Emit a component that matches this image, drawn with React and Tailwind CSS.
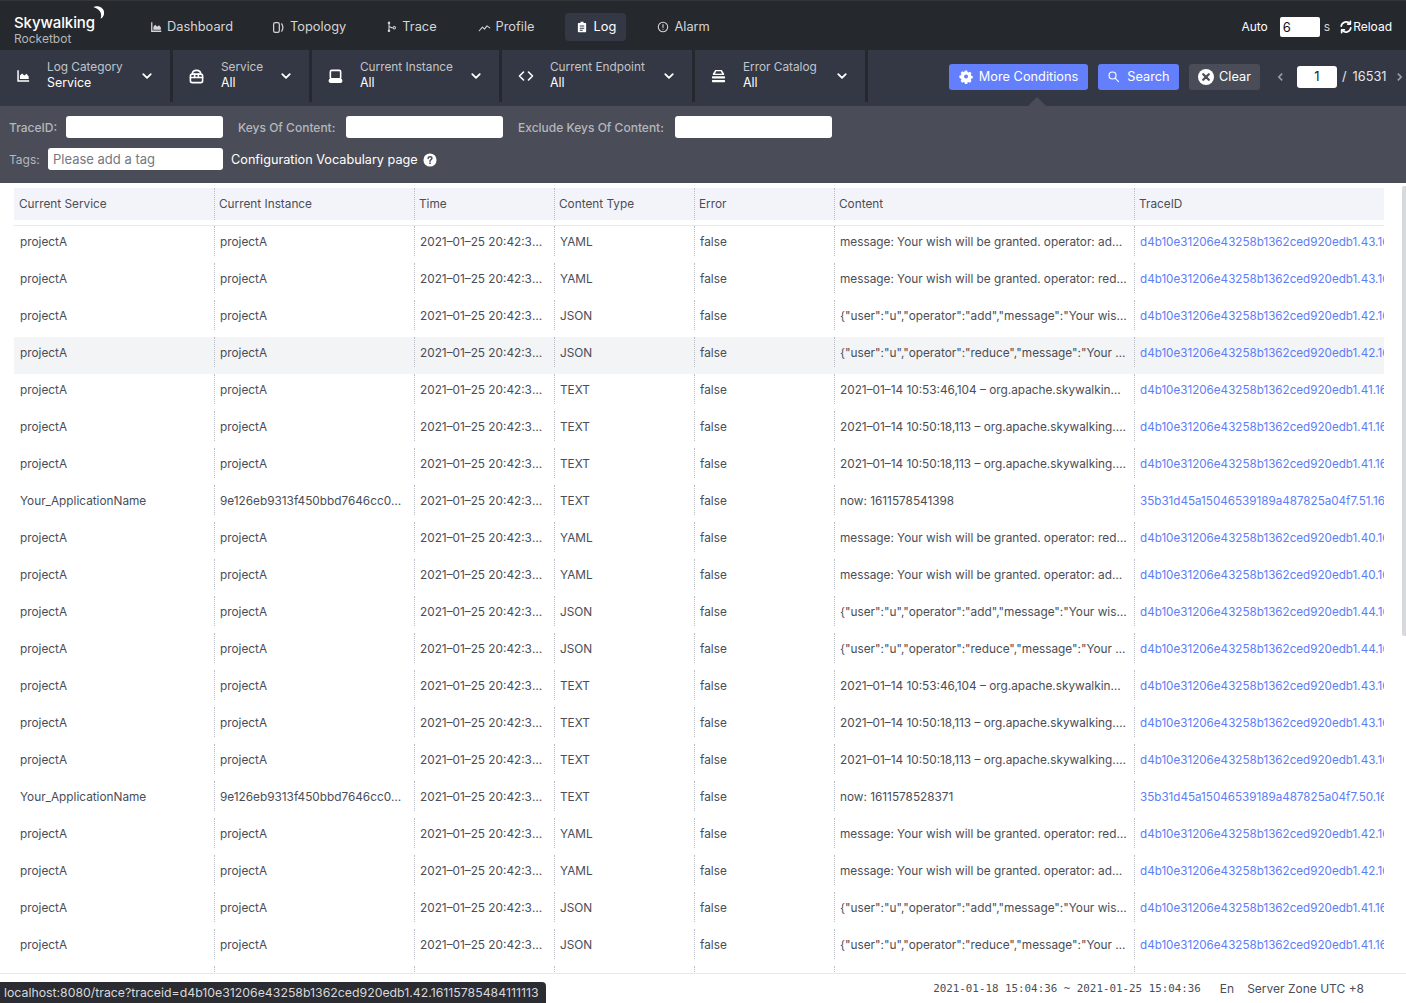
import React from "react";

const ADD = "message: Your wish will be granted. operator: add, user: u";
const REDUCE = "message: Your wish will be granted. operator: reduce, user: u";
const JSON_ADD = '{"user":"u","operator":"add","message":"Your wish will be granted"}';
const JSON_REDUCE = '{"user":"u","operator":"reduce","message":"Your wish will be granted"}';
const TEXT_A = "2021–01–14 10:53:46,104 – org.apache.skywalking.apm.testcase.Application";
const TEXT_B = "2021–01–14 10:50:18,113 – org.apache.skywalking.apm.testcase.Application";
const TID = "d4b10e31206e43258b1362ced920edb1";
const OTHER = "35b31d45a15046539189a487825a04f7";
const APP = "Your_ApplicationName";
const INST = "9e126eb9313f450bbd7646cc0a8f31d2@192.168.1.12";

const logs = [
  ["projectA", "projectA", "YAML", ADD, TID + ".43.16115785484111113"],
  ["projectA", "projectA", "YAML", REDUCE, TID + ".43.16115785484111113"],
  ["projectA", "projectA", "JSON", JSON_ADD, TID + ".42.16115785484111113"],
  ["projectA", "projectA", "JSON", JSON_REDUCE, TID + ".42.16115785484111113"],
  ["projectA", "projectA", "TEXT", TEXT_A, TID + ".41.16115785484111113"],
  ["projectA", "projectA", "TEXT", TEXT_B, TID + ".41.16115785484111113"],
  ["projectA", "projectA", "TEXT", TEXT_B, TID + ".41.16115785484111113"],
  [APP, INST, "TEXT", "now: 1611578541398", OTHER + ".51.16115785413980001"],
  ["projectA", "projectA", "YAML", REDUCE, TID + ".40.16115785484111113"],
  ["projectA", "projectA", "YAML", ADD, TID + ".40.16115785484111113"],
  ["projectA", "projectA", "JSON", JSON_ADD, TID + ".44.16115785484111113"],
  ["projectA", "projectA", "JSON", JSON_REDUCE, TID + ".44.16115785484111113"],
  ["projectA", "projectA", "TEXT", TEXT_A, TID + ".43.16115785484111113"],
  ["projectA", "projectA", "TEXT", TEXT_B, TID + ".43.16115785484111113"],
  ["projectA", "projectA", "TEXT", TEXT_B, TID + ".43.16115785484111113"],
  [APP, INST, "TEXT", "now: 1611578528371", OTHER + ".50.16115785283710001"],
  ["projectA", "projectA", "YAML", REDUCE, TID + ".42.16115785484111113"],
  ["projectA", "projectA", "YAML", ADD, TID + ".42.16115785484111113"],
  ["projectA", "projectA", "JSON", JSON_ADD, TID + ".41.16115785484111113"],
  ["projectA", "projectA", "JSON", JSON_REDUCE, TID + ".41.16115785484111113"],
  ["projectA", "projectA", "YAML", ADD, TID + ".41.16115785484111113"],
];

function Icon({ className, children, fill = "none", stroke = "currentColor", sw = 1.6 }) {
  return (
    <svg viewBox="0 0 16 16" className={className} fill={fill} stroke={stroke} strokeWidth={sw} strokeLinecap="round" strokeLinejoin="round">
      {children}
    </svg>
  );
}

const DashIcon = ({ className }) => (
  <Icon className={className} fill="currentColor" stroke="none">
    <path d="M1.500 1.500h1.700v11.300H15v1.700H1.500z" />
    <path d="M4.500 11.500V7.500l2.500-2.500 2.500 2.500L12 5.500l2.500 3v3z" />
  </Icon>
);
const TopoIcon = ({ className }) => (
  <Icon className={className} sw={1.5}>
    <rect x="2" y="2" width="7" height="12" rx="2" />
    <path d="M12 3.500c1.600 2.600 1.600 6.400 0 9" />
  </Icon>
);
const TraceIcon = ({ className }) => (
  <Icon className={className} sw={1.4}>
    <path d="M4 2.500v11M4 7.500c2 0 2.500 1.500 4.500 1.500" />
    <circle cx="4" cy="2.500" r="1" />
    <circle cx="4" cy="13" r="1" />
    <circle cx="11" cy="9" r="1.600" />
  </Icon>
);
const ProfileIcon = ({ className }) => (
  <Icon className={className} sw={1.300}>
    <path d="M1.500 12l4-4.500 2.500 2.500 3-4 3.500 2.500" />
  </Icon>
);
const LogIcon = ({ className }) => (
  <Icon className={className} fill="currentColor" stroke="none">
    <path fillRule="evenodd" d="M6 1h4v1.500h2.500a1 1 0 0 1 1 1V14a1 1 0 0 1-1 1h-9a1 1 0 0 1-1-1V3.500a1 1 0 0 1 1-1H6zM5 6v1.300h6V6zm0 3v1.300h6V9zm0 2.800V13h4v-1.200z" />
  </Icon>
);
const AlarmIcon = ({ className }) => (
  <Icon className={className} sw={1.400}>
    <circle cx="8" cy="8" r="6.300" />
    <path d="M8 4.800v3.700M8 11v.1" />
  </Icon>
);
const ReloadIcon = ({ className }) => (
  <Icon className={className} sw={1.900}>
    <path d="M2.500 7A5.700 5.700 0 0 1 12.500 4.300" />
    <path d="M13.500 9a5.700 5.700 0 0 1-10 2.700" />
    <path d="M13 1.500v3.200H9.800M3 14.500v-3.200h3.200" />
  </Icon>
);
const Chevron = ({ className }) => (
  <Icon className={className} sw={2.400}>
    <path d="M3 5.500l5 5 5-5" />
  </Icon>
);
const BagIcon = ({ className }) => (
  <Icon className={className} sw={1.700}>
    <rect x="1.500" y="5.500" width="13" height="9" rx="2" />
    <path d="M3.500 5.500C3.500 3 5 1.500 8 1.500s4.500 1.500 4.500 4M1.500 9h13" />
    <path d="M6 5.500V9M10 5.500V9" />
  </Icon>
);
const InstIcon = ({ className }) => (
  <Icon className={className} sw={1.700}>
    <rect x="2.500" y="1.500" width="11" height="9" rx="1.500" />
    <rect x="1.500" y="11" width="13" height="3" rx="1.200" fill="currentColor" />
  </Icon>
);
const CodeIcon = ({ className }) => (
  <Icon className={className} sw={1.600}>
    <path d="M5.500 4L1.500 8l4 4M10.500 4l4 4-4 4" />
  </Icon>
);
const StackIcon = ({ className }) => (
  <Icon className={className} fill="currentColor" stroke="none">
    <path d="M4.500 1h7L14 5v1.500H2V5zM5.500 2.500L4.300 5h7.400l-1.200-2.500z" fillRule="evenodd" />
    <rect x="1" y="7.800" width="14" height="2.400" rx="0.800" />
    <rect x="1" y="11.600" width="14" height="2.400" rx="0.800" />
  </Icon>
);
const GearIcon = ({ className }) => (
  <svg viewBox="0 0 16 16" className={className} fill="currentColor">
    <path fillRule="evenodd" d="M6.600 1h2.800l.4 1.900 1.300.6 1.700-1 2 2-1 1.700.6 1.300 1.900.4v2.800l-1.900.4-.6 1.300 1 1.700-2 2-1.700-1-1.300.6-.4 1.900H6.600l-.4-1.900-1.300-.6-1.700 1-2-2 1-1.700-.6-1.300L-.3 10.100V7.300l1.900-.4.6-1.300-1-1.700 2-2 1.700 1 1.300-.6zM8 6a2.500 2.500 0 1 0 0 5 2.500 2.500 0 0 0 0-5z" transform="translate(0.700 -0.300) scale(0.92)" />
  </svg>
);
const SearchIcon = ({ className }) => (
  <Icon className={className} sw={1.400}>
    <circle cx="6.800" cy="6.800" r="4.300" />
    <path d="M10 10l4.200 4.200" />
  </Icon>
);
const ClearIcon = ({ className }) => (
  <svg viewBox="0 0 16 16" className={className}>
    <circle cx="8" cy="8" r="8" fill="#fff" />
    <path d="M5.200 5.200l5.600 5.600M10.800 5.200l-5.600 5.600" stroke="#4a4d57" strokeWidth="2.200" strokeLinecap="round" />
  </svg>
);
const HelpIcon = ({ className }) => (
  <svg viewBox="0 0 16 16" className={className}>
    <circle cx="8" cy="8" r="7.500" fill="#fff" />
    <path d="M5.800 6.200C5.900 4.800 6.800 4.200 8 4.200c1.300 0 2.200.7 2.200 1.800 0 1.600-2.200 1.600-2.200 3.300" fill="none" stroke="#4a4d57" strokeWidth="1.700" strokeLinecap="round" />
    <circle cx="8" cy="11.700" r="1" fill="#4a4d57" />
  </svg>
);

const navItems = [
  { label: "Dashboard", Ico: DashIcon, cls: "ml-[45px] gap-[5px]", icon: "w-3 h-3" },
  { label: "Topology", Ico: TopoIcon, cls: "ml-[39px] gap-[5px]", icon: "w-[13px] h-[13px]" },
  { label: "Trace", Ico: TraceIcon, cls: "ml-[40px] gap-[4px]", icon: "w-3 h-3" },
  { label: "Profile", Ico: ProfileIcon, cls: "ml-[41px] gap-[5px]", icon: "w-[13px] h-[13px]" },
];

const selectors = [
  { title: "Log Category", value: "Service", Ico: DashIcon, w: "w-[173px]", icon: "w-[14px] h-[14px]", gap: "ml-[17px]" },
  { title: "Service", value: "All", Ico: BagIcon, w: "w-[139px]", icon: "w-[15px] h-[15px]", gap: "ml-[17px]" },
  { title: "Current Instance", value: "All", Ico: InstIcon, w: "w-[190px]", icon: "w-[15px] h-[15px]", gap: "ml-[17px]" },
  { title: "Current Endpoint", value: "All", Ico: CodeIcon, w: "w-[193px]", icon: "w-[16px] h-[16px]", gap: "ml-[16px]" },
  { title: "Error Catalog", value: "All", Ico: StackIcon, w: "w-[173px]", icon: "w-[15px] h-[15px]", gap: "ml-[17px]" },
];

const columns = [
  { label: "Current Service", w: "w-[200px]" },
  { label: "Current Instance", w: "w-[200px]" },
  { label: "Time", w: "w-[140px]" },
  { label: "Content Type", w: "w-[140px]" },
  { label: "Error", w: "w-[140px]" },
  { label: "Content", w: "w-[300px]" },
  { label: "TraceID", w: "w-[250px]" },
];

function Selector({ item }) {
  const Ico = item.Ico;
  return (
    <div className={`flex h-[52px] shrink-0 items-center border-r-[3px] border-[#25282e] ${item.w}`}>
      <Ico className={`${item.icon} ml-[16px] shrink-0 text-white`} />
      <div className={`${item.gap} -mt-[3px] flex-1`}>
        <div className="text-[11.800px] leading-[15px] text-[#c2c4ca]">{item.title}</div>
        <div className="text-[12.400px] leading-[15px] text-white">{item.value}</div>
      </div>
      <Chevron className="mr-[17px] h-3 w-3 shrink-0 text-white" />
    </div>
  );
}

function Cell({ i, children, className = "" }) {
  return (
    <div className={`h-[30px] shrink-0 truncate border-dotted border-[#b8bbc2] pl-[5px] leading-[33px] ${columns[i].w} ${i > 0 ? "border-l" : "pl-[6px]"} ${className}`}>
      {children}
    </div>
  );
}

function LogRow({ log, hover }) {
  return (
    <div className={`flex h-[37px] shrink-0 text-[11.800px] text-[#4a4d57] ${hover ? "bg-[#f3f4f5]" : ""}`}>
      <Cell i={0} className="pr-2">{log[0]}</Cell>
      <Cell i={1} className="pr-[9px]">{log[1]}</Cell>
      <Cell i={2} className="pr-[7px]">2021–01–25 20:42:36.123</Cell>
      <Cell i={3} className="pr-2">{log[2]}</Cell>
      <Cell i={4} className="pr-2">false</Cell>
      <Cell i={5} className="pr-[7px]">{log[3]}</Cell>
      <div className="h-[30px] w-[250px] shrink-0 overflow-hidden whitespace-nowrap border-l border-dotted border-[#b8bbc2] pl-[5px] text-[11.650px] leading-[33px] text-[#5d7df8]">
        {log[4]}
      </div>
    </div>
  );
}

export default function App() {
  return (
    <div className="relative flex h-[1003px] w-[1406px] flex-col overflow-hidden bg-white font-['Inter','Noto_Sans',sans-serif]">
      {/* top nav */}
      <div className="flex h-[50px] shrink-0 items-center border-t border-[#33353a] bg-[#25282d] pt-[3px] text-[12.800px] text-[#d4d5d8]">
        <div className="ml-[14px] mt-[1px] w-[91px] shrink-0">
          <div className="relative flex h-[22px] items-center pt-[4px] text-[15px] font-medium leading-none tracking-[-0.1px] text-white">
            Skywalking
            <svg viewBox="0 0 14 14" className="absolute right-0 top-[-5px] h-[15px] w-[13px]" fill="#fff">
              <path d="M1.500 1C7-1 13.500 2 13 8c-.2 2.600-1.700 4.800-3.700 5.500C10.500 10 9.800 7 8 5 6.300 3 4 1.800 1.500 1z" />
            </svg>
          </div>
          <div className="text-[12px] leading-[14px] text-[#b4b6bb]">Rocketbot</div>
        </div>
        {navItems.map((n) => (
          <div key={n.label} className={`flex items-center ${n.cls}`}>
            <n.Ico className={n.icon} />
            <span>{n.label}</span>
          </div>
        ))}
        <div className="ml-[31px] flex h-7 w-[61px] items-center justify-center gap-[6px] rounded-[4px] bg-[#333844] text-white">
          <LogIcon className="h-3 w-3" />
          <span>Log</span>
        </div>
        <div className="ml-[31px] flex items-center gap-[5px]">
          <AlarmIcon className="h-[12px] w-[12px]" />
          <span>Alarm</span>
        </div>
        <div className="ml-auto flex items-center pr-[14px] text-[12px] text-white">
          <span>Auto</span>
          <div className="ml-3 h-5 w-10 rounded-[2px] bg-white pl-[3px] text-[13px] leading-5 text-[#111]">6</div>
          <span className="ml-[4px] text-[#d4d5d8]">s</span>
          <ReloadIcon className="ml-[9px] h-[14px] w-[14px]" />
          <span>Reload</span>
        </div>
      </div>

      {/* selectors */}
      <div className="relative flex h-14 shrink-0 items-start bg-[#333844]">
        {selectors.map((s) => (
          <Selector key={s.title} item={s} />
        ))}
        <div className="ml-[81px] mt-[13px] flex items-center text-[12.750px] leading-[27px] text-white">
          <div className="flex h-[26px] w-[139px] shrink-0 items-center justify-center gap-[6px] rounded-[3px] bg-[#637ffb]">
            <GearIcon className="h-[14px] w-[14px]" />
            <span>More Conditions</span>
          </div>
          <div className="ml-[10px] flex h-[26px] w-[81px] shrink-0 items-center justify-center gap-[7px] rounded-[3px] bg-[#637ffb]">
            <SearchIcon className="h-[13px] w-[13px]" />
            <span>Search</span>
          </div>
          <div className="ml-[10px] flex h-[26px] w-[71px] shrink-0 items-center justify-center gap-[5px] rounded-[3px] bg-[#4a4d57]">
            <ClearIcon className="h-4 w-4" />
            <span>Clear</span>
          </div>
          <svg viewBox="0 0 8 12" className="ml-[17px] h-[10px] w-[7px] shrink-0" fill="none" stroke="#9a9ca3" strokeWidth="2">
            <path d="M6 2L2 6l4 4" />
          </svg>
          <div className="ml-[13px] flex h-[22px] w-10 shrink-0 items-center justify-center rounded-[3px] bg-white text-[13px] text-[#222]">1</div>
          <span className="ml-[5px] text-[#e6e7ea]">/</span>
          <span className="ml-[6px] text-[#e6e7ea]">16531</span>
          <svg viewBox="0 0 8 12" className="ml-[9px] h-[10px] w-[7px] shrink-0" fill="none" stroke="#9a9ca3" strokeWidth="2">
            <path d="M2 2l4 4-4 4" />
          </svg>
        </div>
        <div className="absolute bottom-0 left-[1028px] h-0 w-0 border-x-[9px] border-b-[9px] border-x-transparent border-b-[#4a4d57]" />
      </div>

      {/* more conditions */}
      <div className="h-[77px] shrink-0 bg-[#4a4d57] pl-[9px] pt-[10px] text-[12px]">
        <div className="flex h-[22px] items-center">
          <span className="w-[57px] pt-[2px] font-medium text-[#b5b7bd]">TraceID:</span>
          <div className="h-[22px] w-[157px] rounded-[3px] bg-white" />
          <span className="ml-[15px] w-[108px] pt-[2px] font-medium text-[#b5b7bd]">Keys Of Content:</span>
          <div className="h-[22px] w-[157px] rounded-[3px] bg-white" />
          <span className="ml-[15px] w-[157px] pt-[2px] font-medium text-[#b5b7bd]">Exclude Keys Of Content:</span>
          <div className="h-[22px] w-[157px] rounded-[3px] bg-white" />
        </div>
        <div className="mt-[10px] flex h-[22px] items-center">
          <span className="w-[39px] pt-[2px] text-[#b5b7bd]">Tags:</span>
          <div className="h-[22px] w-[175px] rounded-[3px] bg-white pl-[5px] text-[13px] leading-[23px] text-[#75787f]">Please add a tag</div>
          <span className="ml-2 pt-[2px] text-[12.700px] text-white">Configuration Vocabulary page</span>
          <HelpIcon className="ml-[5px] mt-[2px] h-[14px] w-[14px]" />
        </div>
      </div>

      {/* log table */}
      <div className="relative flex-1 overflow-hidden pl-[14px] pt-[5px]">
        <div className="flex h-8 w-[1370px] bg-[#f3f4f9] text-[11.800px] text-[#4a4d57]">
          {columns.map((c, i) => (
            <div key={c.label} className={`${c.w} shrink-0 pl-[4px] leading-[33px] ${i > 0 ? "border-l border-dotted border-[#b8bbc2]" : "pl-[5px]"}`}>
              {c.label}
            </div>
          ))}
        </div>
        <div className="mt-[5px] flex w-[1370px] flex-col border-t border-[#e8e9ec]">
          {logs.map((log, i) => (
            <LogRow key={i} log={log} hover={i === 3} />
          ))}
        </div>
        <div className="absolute right-0 top-[3px] h-[450px] w-[4px] rounded-l-[2px] bg-[#d8d9dc]" />
      </div>

      {/* footer */}
      <div className="flex h-[30px] shrink-0 items-center justify-end border-t border-[#e8e9ec] bg-white pr-[42px] pt-[1px] text-[12px] text-[#4a4d57]">
        <span className="font-['DejaVu_Sans_Mono',monospace] text-[10.850px]">2021-01-18 15:04:36 ~ 2021-01-25 15:04:36</span>
        <span className="ml-[19px]">En</span>
        <span className="ml-[13px]">Server Zone UTC +8</span>
      </div>

      {/* status tooltip */}
      <div className="absolute bottom-0 left-0 h-[21px] w-[546px] truncate rounded-tr-[4px] bg-[#2b2d33] pl-1 text-[12.300px] leading-[22px] text-[#d8d9dc]">
        localhost:8080/trace?traceid=d4b10e31206e43258b1362ced920edb1.42.16115785484111113
      </div>
    </div>
  );
}
